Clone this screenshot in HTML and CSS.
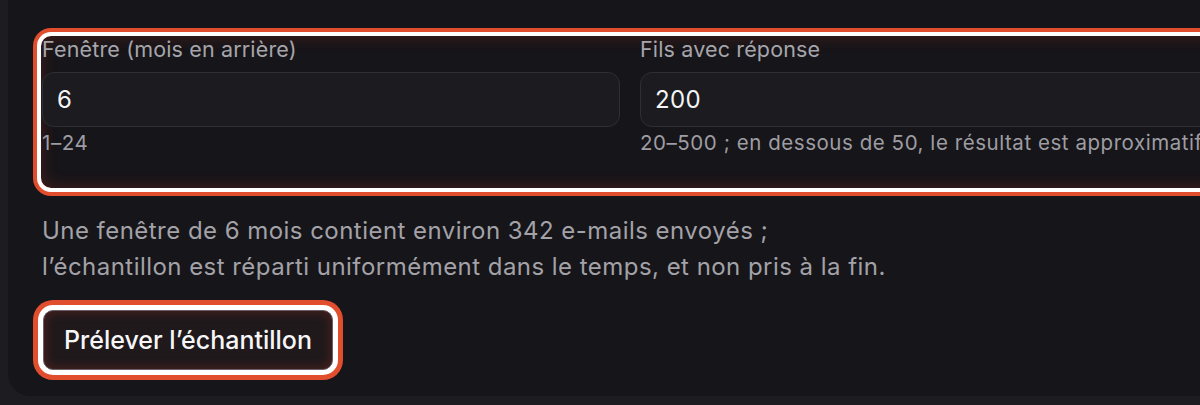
FILE: index.html
```html
<!DOCTYPE html>
<html lang="fr">
<head>
<meta charset="utf-8">
<title>Échantillon</title>
<link rel="stylesheet" href="styles.css">
</head>
<body>
<div class="page">
  <section class="card">
    <div class="fields">
      <div class="field">
        <label class="label">Fenêtre (mois en arrière)</label>
        <div class="input">6</div>
        <div class="help">1–24</div>
      </div>
      <div class="field">
        <label class="label">Fils avec réponse</label>
        <div class="input">200</div>
        <div class="help">20–500 ; en dessous de 50, le résultat est approximatif.</div>
      </div>
    </div>
    <p class="note">Une fenêtre de 6 mois contient environ 342 e-mails envoyés ;<br>l’échantillon est réparti uniformément dans le temps, et non pris à la fin.</p>
    <button class="btn">Prélever l’échantillon</button>
  </section>
</div>
</body>
</html>
```

FILE: styles.css
```css
html, body {
  margin: 0;
  padding: 0;
  background: #1d1c21;
  overflow: hidden;
}
body {
  width: 1200px;
  height: 405px;
  font-family: Inter, "Noto Sans", sans-serif;
}
.page {
  padding-left: 8px;
}
.card {
  background: #161519;
  width: 1230px;
  height: 396px;
  box-sizing: border-box;
  border-bottom-left-radius: 22px;
  padding: 36px 0 0 33px;
}
.fields {
  display: grid;
  grid-template-columns: 578px 578px;
  column-gap: 20px;
  padding: 0 0 32px 1px;
  border-radius: 10px;
  width: 1200px;
  box-sizing: border-box;
  box-shadow: 0 0 0 4px #ffffff, 0 0 0 8px #e04e2e, inset 0 0 16px rgba(190, 55, 35, 0.3);
}
.field {
  display: flex;
  flex-direction: column;
}
.label {
  font-size: 21.5px;
  letter-spacing: 0.15px;
  line-height: 26px;
  color: #a6a5ab;
  white-space: nowrap;
}
.input {
  margin-top: 10px;
  height: 55px;
  box-sizing: border-box;
  border: 1px solid #2f2e34;
  border-radius: 12px;
  background: #1c1b20;
  color: #f4f4f6;
  font-size: 24px;
  letter-spacing: 0.4px;
  line-height: 53px;
  padding-left: 14px;
}
.help {
  margin-top: 3px;
  font-size: 20.5px;
  letter-spacing: 0.55px;
  line-height: 26px;
  color: #9e9da3;
  white-space: nowrap;
}
.note {
  margin: 25px 0 0 1px;
  font-size: 24px;
  letter-spacing: 0.46px;
  line-height: 36px;
  color: #a3a2a8;
  white-space: nowrap;
}
.btn {
  display: block;
  margin: 25px 0 0 2px;
  width: 290px;
  height: 60px;
  border: 1px solid #6a6068;
  border-radius: 10px;
  background: #1f191c;
  color: #f6f6f8;
  font-family: Inter, "Noto Sans", sans-serif;
  font-size: 25px;
  font-weight: 500;
  padding: 0;
  box-shadow: 0 0 0 5px #ffffff, 0 0 0 10px #e04e2e, inset 0 0 12px rgba(190, 55, 35, 0.35);
}
```
